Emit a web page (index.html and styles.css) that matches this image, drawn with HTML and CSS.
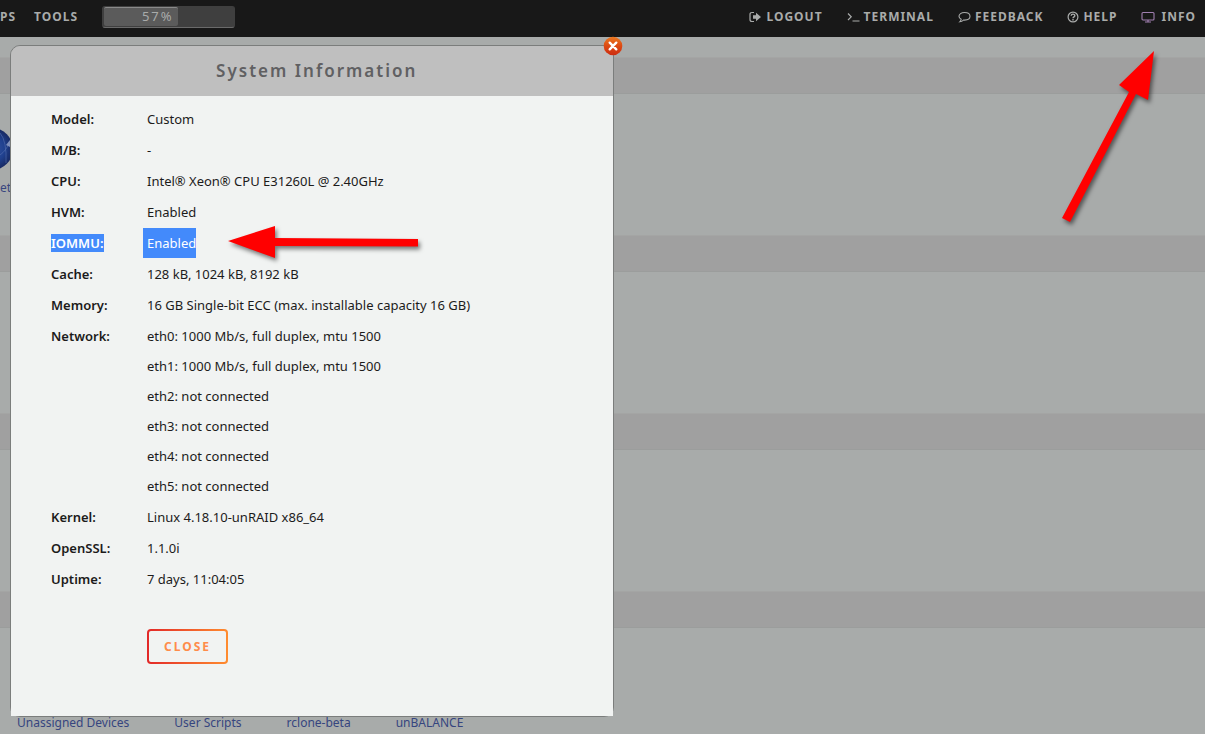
FILE: index.html
```html
<!DOCTYPE html>
<html lang="en">
<head>
<meta charset="utf-8">
<title>System Information</title>
<link rel="stylesheet" href="styles.css">
</head>
<body>
<header class="topbar">
  <nav class="menu">
    <a href="#">PS</a>
    <a href="#">TOOLS</a>
    <div class="usage"><div class="usage-fill" style="width:57%">57%</div></div>
  </nav>
  <nav class="menu tools">
    <a href="#"><svg width="13" height="12" viewBox="0 0 13 12"><path d="M5 1.5H3Q1 1.500 1 3.500V8.500Q1 10.500 3 10.500H5" fill="none" stroke="currentColor" stroke-width="1.200"/><path d="M4 4.200H7V1.800L12 6L7 10.200V7.800H4Z" fill="currentColor"/></svg>LOGOUT</a>
    <a href="#"><svg width="13" height="12" viewBox="0 0 13 12"><path d="M1 2.500L4.200 5.800L1 9M5.500 10H12.500" fill="none" stroke="currentColor" stroke-width="1.200"/></svg>TERMINAL</a>
    <a href="#"><svg width="13" height="12" viewBox="0 0 13 12"><path d="M6.500 1.500C9.800 1.500 12 3.200 12 5.300S9.800 9.100 6.500 9.100L5.500 9Q4 10.700 1.800 10.800Q3.100 9.600 3.200 8.300Q1 7.300 1 5.300C1 3.200 3.200 1.500 6.500 1.500Z" fill="none" stroke="currentColor" stroke-width="1.100"/></svg>FEEDBACK</a>
    <a href="#"><svg width="12" height="12" viewBox="0 0 12 12"><circle cx="6" cy="6" r="4.900" fill="none" stroke="currentColor" stroke-width="1.200"/><path d="M4.200 4.800C4.200 2.600 7.800 2.600 7.800 4.700C7.800 6 6 5.900 6 7.300M6 8.100V9.500" fill="none" stroke="currentColor" stroke-width="1.400"/></svg>HELP</a>
    <a href="#"><svg class="info-icon" width="14" height="12" viewBox="0 0 14 12"><rect x="1" y="1.500" width="12" height="7.500" rx="1" fill="none" stroke="currentColor" stroke-width="1.100"/><path d="M7 9V10.500M4 11H10" fill="none" stroke="currentColor" stroke-width="1.200"/></svg>INFO</a>
  </nav>
</header>
<main class="page">
  <section><div class="band"></div>
    <div class="cell">
      <a class="tile" href="#"><svg width="13" height="46" viewBox="0 0 13 46"><defs><radialGradient id="g" gradientUnits="userSpaceOnUse" cx="-8" cy="24" r="21"><stop offset="0" stop-color="#3655a0"/><stop offset=".6" stop-color="#20418f"/><stop offset="1" stop-color="#172963"/></radialGradient></defs><circle cx="-8" cy="24" r="21" fill="url(#g)"/><path d="M0 8Q7 16 6 38M0 30Q6 26 11 15" stroke="#5670b0" stroke-width=".6" fill="none"/><path d="M6 20L10 15V22Z" fill="#8090ba"/></svg><span>et</span></a>
    </div>
  </section>
  <section><div class="band"></div><div class="cell"></div></section>
  <section><div class="band"></div><div class="cell"></div></section>
  <section><div class="band"></div>
    <div class="cell links"><a href="#">Unassigned Devices</a><a href="#">User Scripts</a><a href="#">rclone-beta</a><a href="#">unBALANCE</a></div>
  </section>
</main>

<div class="dialog" role="dialog" aria-labelledby="title">
  <h1 class="dialog-title" id="title">System Information</h1>
  <button class="dismiss" aria-label="Dismiss"><svg width="20" height="20" viewBox="0 0 20 20"><defs><linearGradient id="o" x1="0" y1="0" x2="0" y2="1"><stop offset="0" stop-color="#ec7a20"/><stop offset=".5" stop-color="#dc4a14"/><stop offset="1" stop-color="#cc2c10"/></linearGradient></defs><circle cx="10" cy="10" r="9.300" fill="url(#o)"/><path d="M6.700 6.700L13.300 13.300M13.300 6.700L6.700 13.300" stroke="#fff" stroke-width="2.400" stroke-linecap="round"/></svg></button>
  <div class="dialog-body">
    <table class="facts">
      <tr><th scope="row">Model:</th><td>Custom</td></tr>
      <tr><th scope="row">M/B:</th><td>-</td></tr>
      <tr><th scope="row">CPU:</th><td>Intel® Xeon® CPU E31260L @ 2.40GHz</td></tr>
      <tr><th scope="row">HVM:</th><td>Enabled</td></tr>
      <tr class="selected"><th scope="row"><span>IOMMU:</span></th><td><span>Enabled</span></td></tr>
      <tr><th scope="row">Cache:</th><td>128 kB, 1024 kB, 8192 kB</td></tr>
      <tr><th scope="row">Memory:</th><td>16 GB Single-bit ECC (max. installable capacity 16 GB)</td></tr>
      <tr><th scope="row">Network:</th><td>eth0: 1000 Mb/s, full duplex, mtu 1500<br>eth1: 1000 Mb/s, full duplex, mtu 1500<br>eth2: not connected<br>eth3: not connected<br>eth4: not connected<br>eth5: not connected</td></tr>
      <tr><th scope="row">Kernel:</th><td>Linux 4.18.10-unRAID x86_64</td></tr>
      <tr><th scope="row">OpenSSL:</th><td>1.1.0i</td></tr>
      <tr><th scope="row">Uptime:</th><td>7 days, 11:04:05</td></tr>
    </table>
    <button class="close">CLOSE</button>
  </div>
</div>
<svg class="arrow arrow-info" width="120" height="190" viewBox="0 0 120 190"><path d="M104 10L98 59L86 53L20 181L12 177L79 51L69 44Z"/></svg>
<svg class="arrow arrow-iommu" width="210" height="50" viewBox="0 0 210 50"><path d="M8 21L55 6V18L198 19V26.500L55 26V38Z"/></svg>
</body>
</html>
```
FILE: styles.css
```css
* { box-sizing: border-box; }
body {
  margin: 0;
  height: 100vh;
  overflow: hidden;
  position: relative;
  background: #a8abaa;
  color: #1c1b1b;
  font: 12px/30px "Noto Sans", sans-serif;
  display: flex;
  flex-direction: column;
}
a { color: inherit; text-decoration: none; }

.topbar {
  flex: none;
  height: 37px;
  padding: 0 9px 4px 0;
  background: #181818;
  color: #a9abaa;
  display: flex;
  justify-content: space-between;
  align-items: center;
}
.menu { display: flex; align-items: center; gap: 18px; font-weight: 700; letter-spacing: 1px; }
.menu a { display: flex; align-items: center; gap: 4px; }
.tools { gap: 24px; }
.info-icon { color: #a07fb0; margin-right: 2px; }
.usage {
  width: 133px;
  height: 22px;
  margin-left: 6px;
  padding: 0 1px 1px;
  border: 1px solid #3f3f3f;
  border-bottom-color: #6a6a6a;
  border-radius: 3px;
  background: #3f3f3f;
}
.usage-fill {
  height: 19px;
  padding-right: 4px;
  border-top: 1px solid #8a8a8a;
  border-radius: 2px;
  background: #5b5b5b;
  font-size: 13px;
  font-weight: 400;
  line-height: 17px;
  letter-spacing: 2px;
  text-align: right;
}

.page { flex: 1; padding-top: 20px; }
.band { height: 37px; background: #a0a0a0; border-top: 1px solid #a4a5a4; border-bottom: 1px solid #9b9d9c; }
.cell { height: 141px; }
.tile { display: flex; flex-direction: column; width: 13px; padding-top: 31px; color: #38467f; line-height: 34px; }
.links { display: flex; align-items: flex-start; gap: 45px; padding: 80px 17px 0; color: #36457f; }

.dialog {
  position: absolute;
  left: 10px;
  top: 45px;
  width: calc(50% + 1px);
  border: 1px solid #7b7d7c;
  border-radius: 10px;
}
.dialog-title {
  margin: 0;
  padding: 10px 10px 10px 20px;
  border-radius: 9px 9px 0 0;
  background: #bfbfbf;
  color: #606062;
  text-align: center;
  font-size: 17px;
  font-weight: 600;
  letter-spacing: 2px;
}
.dismiss { position: absolute; top: -10px; right: -10px; width: 20px; height: 20px; padding: 0; border: 0; background: none; }
.dismiss svg { display: block; }
.dialog-body { padding: 7px 40px 52px; background: #f1f3f2; }
.facts { width: 100%; border-spacing: 0 1px; font-size: 13px; }
.facts th { width: 92px; padding: 0; text-align: left; vertical-align: top; font-weight: 600; }
.facts td { padding: 0 0 0 4px; }
.selected span { background: #438afb; color: #fff; }
.facts .selected td { padding: 0; }
.selected td span { display: inline-block; padding-left: 4px; vertical-align: top; }
.close {
  display: block;
  width: 81px;
  height: 35px;
  margin: 34px 0 0 96px;
  padding: 0;
  border: 2px solid transparent;
  border-radius: 4px;
  background: linear-gradient(#f1f3f2, #f1f3f2) padding-box, linear-gradient(90deg, #e22828, #ff8c2f) border-box;
  color: #ff8c4a;
  font: 700 12px/20px "Noto Sans", sans-serif;
  letter-spacing: 2px;
}

.arrow { position: absolute; fill: #f00; filter: drop-shadow(2px 3px 2px rgba(0, 0, 0, .5)); pointer-events: none; }
.arrow-info { right: 35px; top: 41px; }
.arrow-iommu { left: 220px; top: 220px; }
```
